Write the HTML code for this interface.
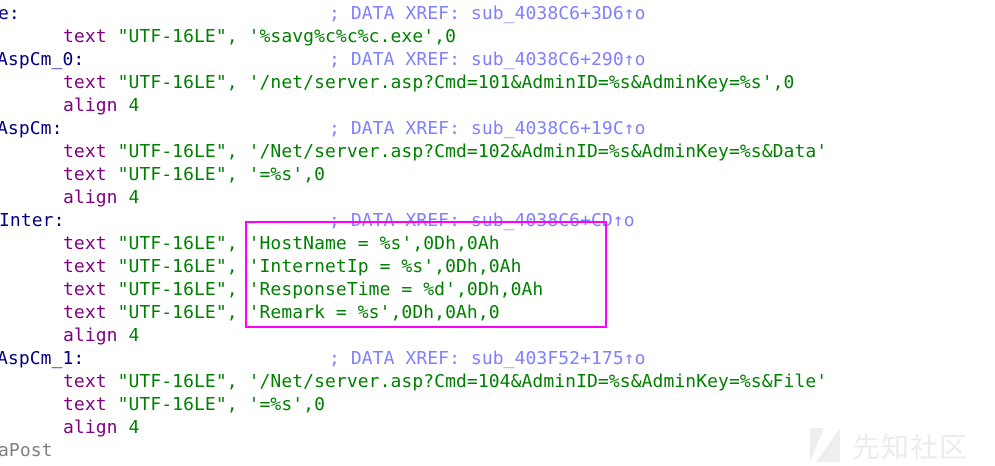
<!DOCTYPE html>
<html><head><meta charset="utf-8"><style>
html,body{margin:0;padding:0;background:#fff;width:995px;height:466px;overflow:hidden;position:relative}
.w{position:absolute;left:0;top:2px;width:995px;height:466px}
.l{position:absolute;font-family:"DejaVu Sans Mono","Liberation Mono",monospace;font-size:18px;white-space:pre;line-height:23px;color:#000080;letter-spacing:0.08px}
.k{color:#800080}.s{color:#008000}.c{color:#8080ff}.g{color:#808080}
.box{position:absolute;left:245px;top:221px;width:358px;height:103px;border:2px solid #ff00ff}
.wm{position:absolute;left:812px;top:426px;font-family:"Noto Sans CJK SC",sans-serif;font-size:28px;color:#ececec;letter-spacing:1px}
</style></head><body>
<div class="w">
<div class="l" style="left:-2px;top:0">e:</div><div class="l c" style="left:329px;top:0">; DATA XREF: sub_4038C6+3D6↑o</div>
<div class="l" style="left:63px;top:23px"><span class="k">text</span> <span class="s">"UTF-16LE", '%savg%c%c%c.exe',0</span></div>
<div class="l" style="left:-3px;top:46px">AspCm_0:</div><div class="l c" style="left:329px;top:46px">; DATA XREF: sub_4038C6+290↑o</div>
<div class="l" style="left:63px;top:69px"><span class="k">text</span> <span class="s">"UTF-16LE", '/net/server.asp?Cmd=101&amp;AdminID=%s&amp;AdminKey=%s',0</span></div>
<div class="l" style="left:63px;top:92px"><span class="k">align</span> <span class="s">4</span></div>
<div class="l" style="left:-3px;top:115px">AspCm:</div><div class="l c" style="left:329px;top:115px">; DATA XREF: sub_4038C6+19C↑o</div>
<div class="l" style="left:63px;top:138px"><span class="k">text</span> <span class="s">"UTF-16LE", '/Net/server.asp?Cmd=102&amp;AdminID=%s&amp;AdminKey=%s&amp;Data'</span></div>
<div class="l" style="left:63px;top:161px"><span class="k">text</span> <span class="s">"UTF-16LE", '=%s',0</span></div>
<div class="l" style="left:63px;top:184px"><span class="k">align</span> <span class="s">4</span></div>
<div class="l" style="left:-1px;top:207px">Inter:</div><div class="l c" style="left:329px;top:207px">; DATA XREF: sub_4038C6+CD↑o</div>
<div class="l" style="left:63px;top:230px"><span class="k">text</span> <span class="s">"UTF-16LE", 'HostName = %s',0Dh,0Ah</span></div>
<div class="l" style="left:63px;top:253px"><span class="k">text</span> <span class="s">"UTF-16LE", 'InternetIp = %s',0Dh,0Ah</span></div>
<div class="l" style="left:63px;top:276px"><span class="k">text</span> <span class="s">"UTF-16LE", 'ResponseTime = %d',0Dh,0Ah</span></div>
<div class="l" style="left:63px;top:299px"><span class="k">text</span> <span class="s">"UTF-16LE", 'Remark = %s',0Dh,0Ah,0</span></div>
<div class="l" style="left:63px;top:322px"><span class="k">align</span> <span class="s">4</span></div>
<div class="l" style="left:-3px;top:345px">AspCm_1:</div><div class="l c" style="left:329px;top:345px">; DATA XREF: sub_403F52+175↑o</div>
<div class="l" style="left:63px;top:368px"><span class="k">text</span> <span class="s">"UTF-16LE", '/Net/server.asp?Cmd=104&amp;AdminID=%s&amp;AdminKey=%s&amp;File'</span></div>
<div class="l" style="left:63px;top:391px"><span class="k">text</span> <span class="s">"UTF-16LE", '=%s',0</span></div>
<div class="l" style="left:63px;top:414px"><span class="k">align</span> <span class="s">4</span></div>
<div class="l g" style="left:-2px;top:437px">aPost</div>
</div>
<div class="box"></div>
<svg style="position:absolute;left:810px;top:428px" width="34" height="36"><polygon points="0,0 14,0 0,34" fill="#eee"/><polygon points="30,0 30,34 6,34" fill="#eee"/></svg>
<div class="wm" style="left:852px">先知社区</div>
</body></html>
